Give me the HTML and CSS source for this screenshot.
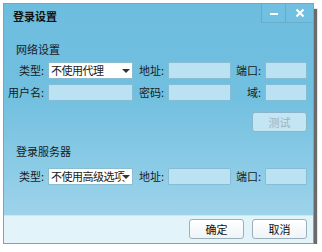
FILE: index.html
```html
<!DOCTYPE HTML>
<html>
<head>
<meta charset="utf-8">
<link rel="stylesheet" href="styles.css">
</head>
<body>

<div class="window">
  <div class="titlebar">
    <div class="title">登录设置</div>
    <div class="win-btn">
      <svg width="10" height="10" viewBox="0 0 10 10"><rect x="1" y="5" width="8" height="2" fill="#fff"/></svg>
    </div>
    <div class="win-btn">
      <svg width="10" height="10" viewBox="0 0 10 10"><path d="M1.5 1.5 L8.5 8.5 M8.5 1.5 L1.5 8.5" stroke="#fff" stroke-width="2"/></svg>
    </div>
  </div>

  <div class="content">
    <div class="section-title">网络设置</div>
    <div class="form-grid">
      <div class="label">类型:</div>
      <div class="select">不使用代理<span class="arrow"></span></div>
      <div class="label">地址:</div>
      <div class="field"></div>
      <div class="label">端口:</div>
      <div class="field"></div>

      <div class="label">用户名:</div>
      <div class="field"></div>
      <div class="label">密码:</div>
      <div class="field"></div>
      <div class="label">域:</div>
      <div class="field"></div>
    </div>
    <div class="test-row">
      <div class="button disabled">测试</div>
    </div>

    <div class="section-title second">登录服务器</div>
    <div class="form-grid">
      <div class="label">类型:</div>
      <div class="select">不使用高级选项<span class="arrow"></span></div>
      <div class="label">地址:</div>
      <div class="field"></div>
      <div class="label">端口:</div>
      <div class="field"></div>
    </div>
  </div>

  <div class="footer">
    <div class="button">确定</div>
    <div class="button">取消</div>
  </div>
</div>

</body>
</html>
```

FILE: styles.css
```css
body {
  margin: 0;
  background-color: #ffffff;
  font-family: "Noto Sans CJK SC", "Noto Sans", sans-serif;
  font-size: 11px;
  color: #1a1a1a;
}

.window {
  margin: 3px 0 0 3px;
  width: 309px;
  height: 239px;
  border: 1px solid #8e9ea6;
  display: flex;
  flex-direction: column;
  background: linear-gradient(to bottom, #6dbddf 0%, #72c0e0 40%, #a8d8ec 100%);
  box-shadow: 4px 5px 1px -1px #6a6a6a;
}

.titlebar {
  height: 19px;
  display: flex;
  align-items: flex-start;
}

.title {
  flex: 1;
  padding-left: 9px;
  line-height: 25px;
  font-weight: bold;
  color: #111;
}

.win-btn {
  width: 23px;
  height: 18px;
  border-left: 1px solid #64acca;
  border-bottom: 1px solid #68aecb;
  background-color: #72c0e1;
  display: flex;
  align-items: center;
  justify-content: center;
}

.win-btn:last-child {
  width: 27px;
}

.content {
  flex: 1;
}

.section-title {
  margin: 18px 0 0 12px;
  line-height: 16px;
  color: #1a1a1a;
}

.section-title.second {
  margin-top: 11px;
}

.form-grid {
  display: grid;
  grid-template-columns: 44px 85px 35px 63px 34px 42px;
  grid-auto-rows: 17px;
  row-gap: 5px;
  margin-top: 5px;
}

.section-title.second + .form-grid {
  margin-top: 9px;
}

.label {
  text-align: right;
  padding-right: 4px;
  line-height: 17px;
  white-space: nowrap;
}

.field {
  background-color: #bbe2f2;
  border: 1px solid #86bdd4;
  border-radius: 1px;
}

.select {
  background-color: #ffffff;
  border: 1px solid #8bbdd2;
  line-height: 15px;
  padding-left: 2px;
  letter-spacing: -0.5px;
  position: relative;
  white-space: nowrap;
  overflow: hidden;
}

.arrow {
  position: absolute;
  right: 2px;
  top: 6px;
  border-left: 4px solid transparent;
  border-right: 4px solid transparent;
  border-top: 4px solid #333;
  background-color: #ffffff;
  box-shadow: 0 0 0 1px #ffffff;
}

.test-row {
  display: flex;
  justify-content: flex-end;
  padding-right: 6px;
  margin-top: 11px;
}

.button {
  width: 53px;
  height: 18px;
  line-height: 18px;
  text-align: center;
  border: 1px solid #9cb0bc;
  border-radius: 3px;
  background: linear-gradient(to bottom, #ffffff, #eef4f7);
  color: #111;
}

.button.disabled {
  background: #c4e5f3;
  border-color: #8ab6c9;
  color: #9fb3bd;
}

.footer {
  height: 28px;
  border-top: 1px solid #c9e8f5;
  background-color: #e2f3fa;
  display: flex;
  justify-content: flex-end;
  align-items: flex-start;
  gap: 8px;
  padding: 3px 6px 0 0;
  box-sizing: border-box;
}
```
